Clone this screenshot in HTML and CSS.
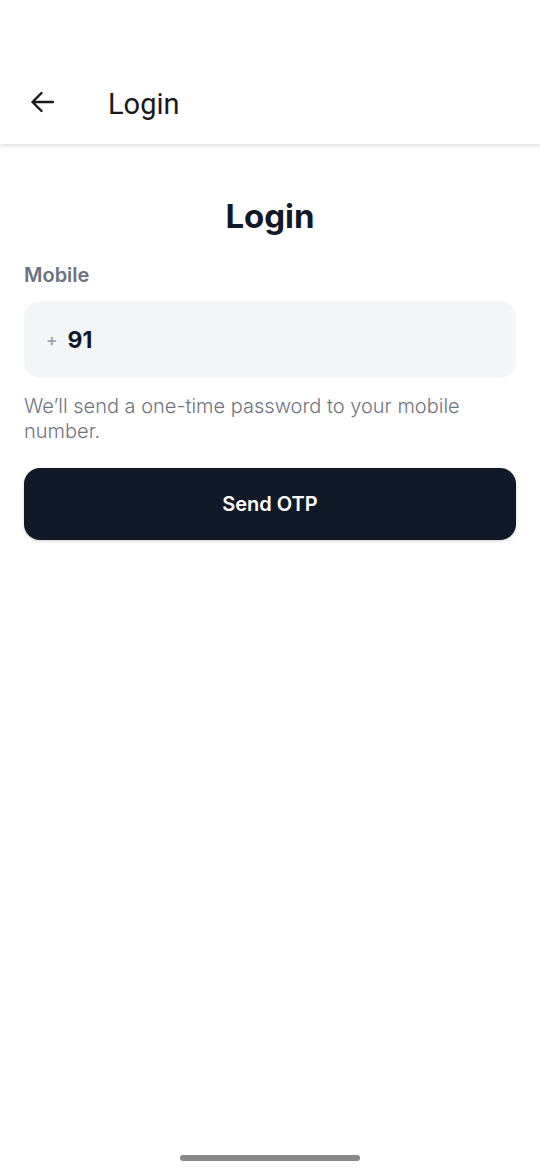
FILE: index.html
```html
<!DOCTYPE html>
<html lang="en">
<head>
<meta charset="utf-8">
<title>Login</title>
<link rel="stylesheet" href="styles.css">
</head>
<body>
<div class="screen">
  <header class="appbar">
    <svg class="back" width="24" height="24" viewBox="0 0 24 24" aria-hidden="true">
      <path d="M23 12H2.5M11.5 3L2.5 12l9 9" fill="none" stroke="#1a1a1a" stroke-width="2.4" stroke-linecap="round" stroke-linejoin="round"/>
    </svg>
    <span class="appbar-title">Login</span>
  </header>
  <main class="content">
    <h1 class="heading">Login</h1>
    <label class="label">Mobile</label>
    <div class="field">
      <span class="plus">+</span>
      <span class="code">91</span>
    </div>
    <p class="hint">We’ll send a one-time password to your mobile number.</p>
    <button class="btn">Send OTP</button>
  </main>
  <div class="home-bar"><span class="home-pill"></span></div>
</div>
</body>
</html>
```
FILE: styles.css
```css
* { box-sizing: border-box; }
html, body { margin: 0; padding: 0; background: #fff; }
body { font-family: Inter, "Noto Sans", sans-serif; color: #111827; }
.screen { min-height: 1172px; display: flex; flex-direction: column; }
.appbar {
  height: 144px;
  padding: 62px 0 0 30px;
  display: flex;
  align-items: center;
  background: #fff;
  box-shadow: 0 2px 4px rgba(0,0,0,0.13);
  position: relative;
  z-index: 1;
}
.back { display: block; flex: none; margin-top: -2px; }
.appbar-title {
  margin-left: 54px;
  margin-top: 2px;
  font-family: Roboto, sans-serif;
  font-size: 29px;
  font-weight: 400;
  color: #1a1a1a;
  line-height: 36px;
}
.content { padding: 0 24px; display: flex; flex-direction: column; }
.heading {
  margin: 52px 0 0;
  text-align: center;
  font-size: 33px;
  line-height: 40px;
  font-weight: 700;
  color: #111827;
}
.label {
  margin-top: 27px;
  font-size: 20px;
  line-height: 24px;
  font-weight: 600;
  color: #6b7280;
}
.field {
  margin-top: 14px;
  height: 77px;
  border-radius: 16px;
  background: #f4f5f7;
  display: flex;
  align-items: center;
  padding-left: 22px;
}
.plus { font-size: 17px; color: #9ca3af; font-weight: 600; margin-right: 10px; }
.code { font-size: 23px; font-weight: 700; color: #111827; }
.hint {
  margin: 16px 0 0;
  font-size: 20px;
  line-height: 25px;
  font-weight: 300;
  color: #6f7580;
}
.btn {
  margin-top: 24px;
  height: 72px;
  border: none;
  border-radius: 16px;
  background: #111827;
  color: #fff;
  font-family: Inter, sans-serif;
  font-size: 20px;
  font-weight: 600;
  box-shadow: 0 1px 3px rgba(0,0,0,0.2);
}
.home-bar { margin-top: auto; height: 17px; display: flex; justify-content: center; align-items: flex-start; }
.home-pill { width: 180px; height: 6px; border-radius: 3px; background: #888; }
```
